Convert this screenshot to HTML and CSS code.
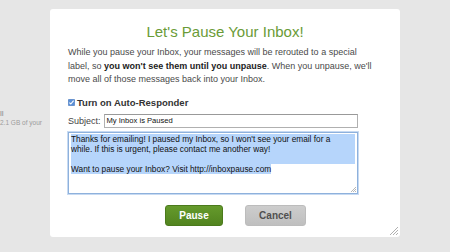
FILE: index.html
```html
<!DOCTYPE html>
<html>
<head>
<meta charset="utf-8">
<link rel="stylesheet" href="styles.css">
</head>
<body>
<div class="page">
  <div class="storage">
    <div class="storage-a">ll</div>
    <div class="storage-b">2.1 GB of your</div>
  </div>
</div>
<div class="modal">
  <h1 class="title">Let's Pause Your Inbox!</h1>
  <p class="intro">While you pause your Inbox, your messages will be rerouted to a special<br>label, so <b>you won't see them until you unpause</b>. When you unpause, we'll<br>move all of those messages back into your Inbox.</p>
  <div class="check-row">
    <svg class="check" width="7" height="7" viewBox="0 0 7 7"><rect x="0.25" y="0.25" width="6.5" height="6.5" rx="1" fill="#5b8fd6" stroke="#3f6fb5" stroke-width="0.5"/><path d="M1.4 3.6 L2.8 5 L5.6 1.6" fill="none" stroke="#fff" stroke-width="1.1"/></svg>
    <span class="check-label">Turn on Auto-Responder</span>
  </div>
  <div class="subject-row">
    <span class="subject-label">Subject:</span>
    <div class="input">My Inbox is Paused</div>
  </div>
  <div class="textarea">
    <div class="sel-line">Thanks for emailing! I paused my Inbox, so I won't see your email for a</div>
    <div class="sel-line">while. If this is urgent, please contact me another way!</div>
    <div class="sel-line">&nbsp;</div>
    <div class="line"><span class="sel">Want to pause your Inbox? Visit http://inboxpause.com</span></div>
    <svg class="ta-grip" width="6" height="6" viewBox="0 0 6 6"><path d="M6 1 L1 6 M6 3 L3 6 M6 5 L5 6" stroke="#9a9a9a" stroke-width="0.7"/></svg>
  </div>
  <div class="buttons">
    <div class="btn btn-pause">Pause</div>
    <div class="btn btn-cancel">Cancel</div>
  </div>
  <svg class="grip" width="9" height="9" viewBox="0 0 9 9"><path d="M9 1 L1 9 M9 4 L4 9 M9 7 L7 9" stroke="#9c9c9c" stroke-width="0.8"/></svg>
</div>
</body>
</html>
```
FILE: styles.css
```css
html, body {
  margin: 0;
  padding: 0;
}
body {
  width: 450px;
  height: 252px;
  overflow: hidden;
  position: relative;
  background: #e6e6e6;
  font-family: "Liberation Sans", Arial, sans-serif;
}
.page {
  padding-top: 109px;
}
.storage {
  font-size: 6.5px;
  line-height: 9px;
  color: #9c9c9c;
}
.storage-a {
  font-weight: bold;
}
.title {
  margin: 0;
  font-size: 15px;
  line-height: 17px;
  font-weight: normal;
  color: #6a9b37;
  text-align: center;
}
.modal {
  position: absolute;
  left: 50px;
  top: 9px;
  width: 350px;
  height: 228px;
  box-sizing: border-box;
  padding: 14px 18px 0;
  background: #fff;
  border-radius: 3px;
}
.intro {
  margin: 6px 0 0;
  font-size: 9px;
  line-height: 13.5px;
  color: #4a4a4a;
  white-space: nowrap;
}
.intro b {
  color: #222;
}
.check-row {
  margin-top: 10px;
  height: 12px;
  display: flex;
  align-items: center;
  gap: 2px;
}
.check {
  display: block;
}
.check-label {
  font-size: 9.5px;
  font-weight: bold;
  color: #333;
}
.subject-row {
  margin-top: 5px;
  width: 290px;
  display: flex;
  align-items: center;
  gap: 3px;
}
.subject-label {
  font-size: 9px;
  color: #444;
}
.input {
  flex: 1;
  height: 14px;
  box-sizing: border-box;
  border: 1px solid #b0b0b0;
  border-top-color: #999;
  padding: 0 2px;
  font-size: 7.6px;
  line-height: 12px;
  color: #111;
}
.textarea {
  position: relative;
  margin-top: 4px;
  width: 290px;
  height: 62px;
  box-sizing: border-box;
  border: 1px solid #8eb1dc;
  box-shadow: 0 0 0 1px #c7daf2;
  padding: 1px 2px 0;
  font-size: 8.3px;
  line-height: 10px;
  color: #111;
}
.sel-line {
  background: #b6d5fb;
  white-space: nowrap;
}
.line {
  white-space: nowrap;
}
.sel {
  background: #b6d5fb;
}
.ta-grip {
  position: absolute;
  right: 1px;
  bottom: 1px;
}
.buttons {
  margin-top: 11px;
  margin-left: 97px;
  display: flex;
  gap: 22px;
}
.btn {
  height: 21px;
  box-sizing: border-box;
  border-radius: 3px;
  font-size: 10px;
  font-weight: bold;
  line-height: 19px;
  text-align: center;
}
.btn-pause {
  width: 58px;
  background: linear-gradient(#659a2c, #52841f);
  border: 1px solid #4b7a1c;
  color: #fff;
}
.btn-cancel {
  width: 61px;
  background: linear-gradient(#cdcdcd, #bfbfbf);
  border: 1px solid #bcbcbc;
  color: #505050;
}
.grip {
  position: absolute;
  right: 2px;
  bottom: 2px;
}
```
